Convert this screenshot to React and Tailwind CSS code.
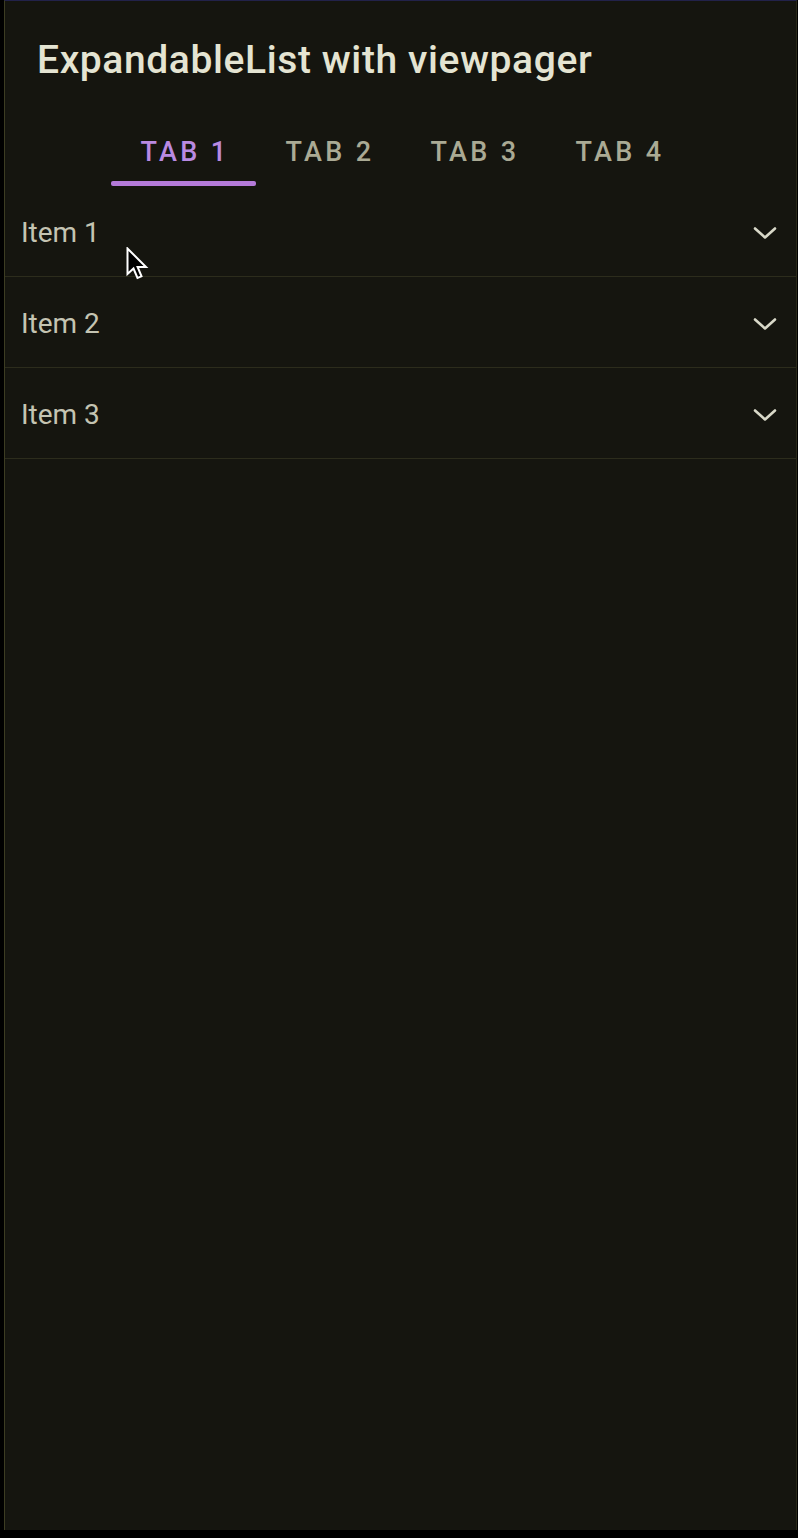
import React from "react";

function Chevron() {
  return (
    <svg width="26" height="16" viewBox="0 0 26 16" fill="none">
      <path d="M3 3.5 L13 12.5 L23 3.5" stroke="#d8d8c8" strokeWidth="2.6" strokeLinecap="round" strokeLinejoin="round" />
    </svg>
  );
}

function Cursor() {
  return (
    <svg width="24" height="36" viewBox="0 0 24 36" className="absolute left-[126px] top-[247px]">
      <path d="M1.5 1.5 L1.5 27 L7.5 21.5 L11.5 31 L15.5 29.3 L11.6 20 L20 20 Z" fill="#000" stroke="#fff" strokeWidth="2" strokeLinejoin="miter" />
    </svg>
  );
}

export default function App() {
  const tabs = ["TAB 1", "TAB 2", "TAB 3", "TAB 4"];
  const items = ["Item 1", "Item 2", "Item 3"];
  return (
    <div className="w-[798px] h-[1538px] bg-black relative overflow-hidden" style={{ fontFamily: "Roboto, 'Noto Sans', sans-serif" }}>
      <div className="h-[1530px] ml-[4px] w-[793px] bg-[#15150f] border-l border-t border-r border-l-[#3c3c22] border-t-[#22224a] border-r-[#2a2a1a] flex flex-col">
        <div className="h-[113px] flex items-center pl-[32px] pt-[6px]">
          <span className="text-[39px] leading-none text-[#e4e4d2] font-medium tracking-[0.6px]">ExpandableList with viewpager</span>
        </div>
        <div className="flex justify-center">
          {tabs.map((t, i) => (
            <div key={t} className="w-[145px] h-[72px] flex flex-col items-center">
              <div className="flex-1 flex items-center pt-[10px] pl-[4px]">
                <span className={`text-[27px] leading-none font-medium tracking-[3.4px] ${i === 0 ? "text-[#b98ae2]" : "text-[#aaaa94]"}`}>{t}</span>
              </div>
              <div className={`h-[5px] w-full rounded-[2px] ${i === 0 ? "bg-[#b47ad9]" : "bg-transparent"}`} />
            </div>
          ))}
        </div>
        {items.map((it) => (
          <div key={it} className="h-[91px] flex items-center justify-between pl-[16px] pr-[18px] border-b border-[#2c2c1c]">
            <span className="text-[28px] leading-none text-[#c4c4b2] mt-[3px]">{it}</span>
            <div className="mt-[4px]"><Chevron /></div>
          </div>
        ))}
      </div>
      <Cursor />
    </div>
  );
}
